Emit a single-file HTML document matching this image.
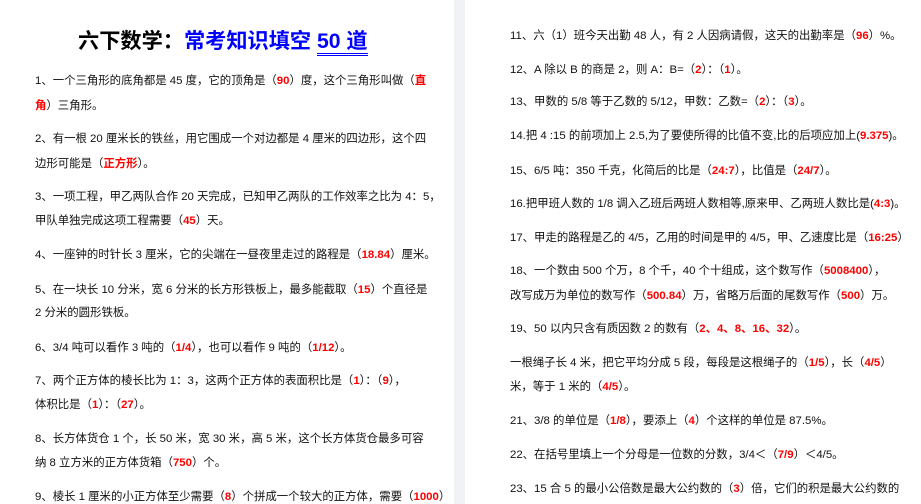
<!DOCTYPE html>
<html><head><meta charset="utf-8"><style>
body{margin:0;width:921px;height:504px;overflow:hidden;background:#fff;font-family:"Liberation Sans","Noto Sans CJK SC",sans-serif;position:relative}
.gap{position:absolute;left:454px;top:0;width:11px;height:504px;background:#f1f2f6}
.l{position:absolute;font-size:11.4px;color:#111;white-space:nowrap;line-height:14px}
b{color:#f00;font-weight:bold}
.t{position:absolute;left:78px;top:30px;font-size:21.2px;font-weight:bold;white-space:nowrap;line-height:24px}
.t .u{border-bottom:3px double #00f}
</style></head><body>
<div class="gap"></div>
<div class="t"><span style="color:#000">六下数学：</span><span style="color:#00f">常考知识填空 <span class="u">50 道</span></span></div>
<div class="l" style="left:35px;top:74px">1、一个三角形的底角都是 45 度，它的顶角是（<b>90</b>）度，这个三角形叫做（<b>直</b></div>
<div class="l" style="left:35px;top:99px"><b>角</b>）三角形。</div>
<div class="l" style="left:35px;top:132px">2、有一根 20 厘米长的铁丝，用它围成一个对边都是 4 厘米的四边形，这个四</div>
<div class="l" style="left:35px;top:157px">边形可能是（<b>正方形</b>）。</div>
<div class="l" style="left:35px;top:190px">3、一项工程，甲乙两队合作 20 天完成，已知甲乙两队的工作效率之比为 4：5，</div>
<div class="l" style="left:35px;top:214px">甲队单独完成这项工程需要（<b>45</b>）天。</div>
<div class="l" style="left:35px;top:248px">4、一座钟的时针长 3 厘米，它的尖端在一昼夜里走过的路程是（<b>18.84</b>）厘米。</div>
<div class="l" style="left:35px;top:283px">5、在一块长 10 分米，宽 6 分米的长方形铁板上，最多能截取（<b>15</b>）个直径是</div>
<div class="l" style="left:35px;top:306px">2 分米的圆形铁板。</div>
<div class="l" style="left:35px;top:341px">6、3/4 吨可以看作 3 吨的（<b>1/4</b>），也可以看作 9 吨的（<b>1/12</b>）。</div>
<div class="l" style="left:35px;top:374px">7、两个正方体的棱长比为 1：3，这两个正方体的表面积比是（<b>1</b>）：（<b>9</b>），</div>
<div class="l" style="left:35px;top:398px">体积比是（<b>1</b>）：（<b>27</b>）。</div>
<div class="l" style="left:35px;top:432px">8、长方体货仓 1 个，长 50 米，宽 30 米，高 5 米，这个长方体货仓最多可容</div>
<div class="l" style="left:35px;top:456px">纳 8 立方米的正方体货箱（<b>750</b>）个。</div>
<div class="l" style="left:35px;top:490px">9、棱长 1 厘米的小正方体至少需要（<b>8</b>）个拼成一个较大的正方体，需要（<b>1000</b>）</div>

<div class="l" style="left:510px;top:29px">11、六（1）班今天出勤 48 人，有 2 人因病请假，这天的出勤率是（<b>96</b>）%。</div>
<div class="l" style="left:510px;top:63px">12、A 除以 B 的商是 2，则 A：B=（<b>2</b>）：（<b>1</b>）。</div>
<div class="l" style="left:510px;top:95px">13、甲数的 5/8 等于乙数的 5/12，甲数：乙数=（<b>2</b>）：（<b>3</b>）。</div>
<div class="l" style="left:510px;top:129px">14.把 4 :15 的前项加上 2.5,为了要使所得的比值不变,比的后项应加上(<b>9.375</b>)。</div>
<div class="l" style="left:510px;top:164px">15、6/5 吨：350 千克，化简后的比是（<b>24:7</b>），比值是（<b>24/7</b>）。</div>
<div class="l" style="left:510px;top:197px">16.把甲班人数的 1/8 调入乙班后两班人数相等,原来甲、乙两班人数比是(<b>4:3</b>)。</div>
<div class="l" style="left:510px;top:231px">17、甲走的路程是乙的 4/5，乙用的时间是甲的 4/5，甲、乙速度比是（<b>16:25</b>）</div>
<div class="l" style="left:510px;top:264px">18、一个数由 500 个万，8 个千，40 个十组成，这个数写作（<b>5008400</b>），</div>
<div class="l" style="left:510px;top:289px">改写成万为单位的数写作（<b>500.84</b>）万，省略万后面的尾数写作（<b>500</b>）万。</div>
<div class="l" style="left:510px;top:322px">19、50 以内只含有质因数 2 的数有（<b>2、4、8、16、32</b>）。</div>
<div class="l" style="left:510px;top:356px">一根绳子长 4 米，把它平均分成 5 段，每段是这根绳子的（<b>1/5</b>），长（<b>4/5</b>）</div>
<div class="l" style="left:510px;top:380px">米，等于 1 米的（<b>4/5</b>）。</div>
<div class="l" style="left:510px;top:414px">21、3/8 的单位是（<b>1/8</b>），要添上（<b>4</b>）个这样的单位是 87.5%。</div>
<div class="l" style="left:510px;top:448px">22、在括号里填上一个分母是一位数的分数，3/4＜（<b>7/9</b>）＜4/5。</div>
<div class="l" style="left:510px;top:482px">23、15 合 5 的最小公倍数是最大公约数的（<b>3</b>）倍，它们的积是最大公约数的</div>
</body></html>
